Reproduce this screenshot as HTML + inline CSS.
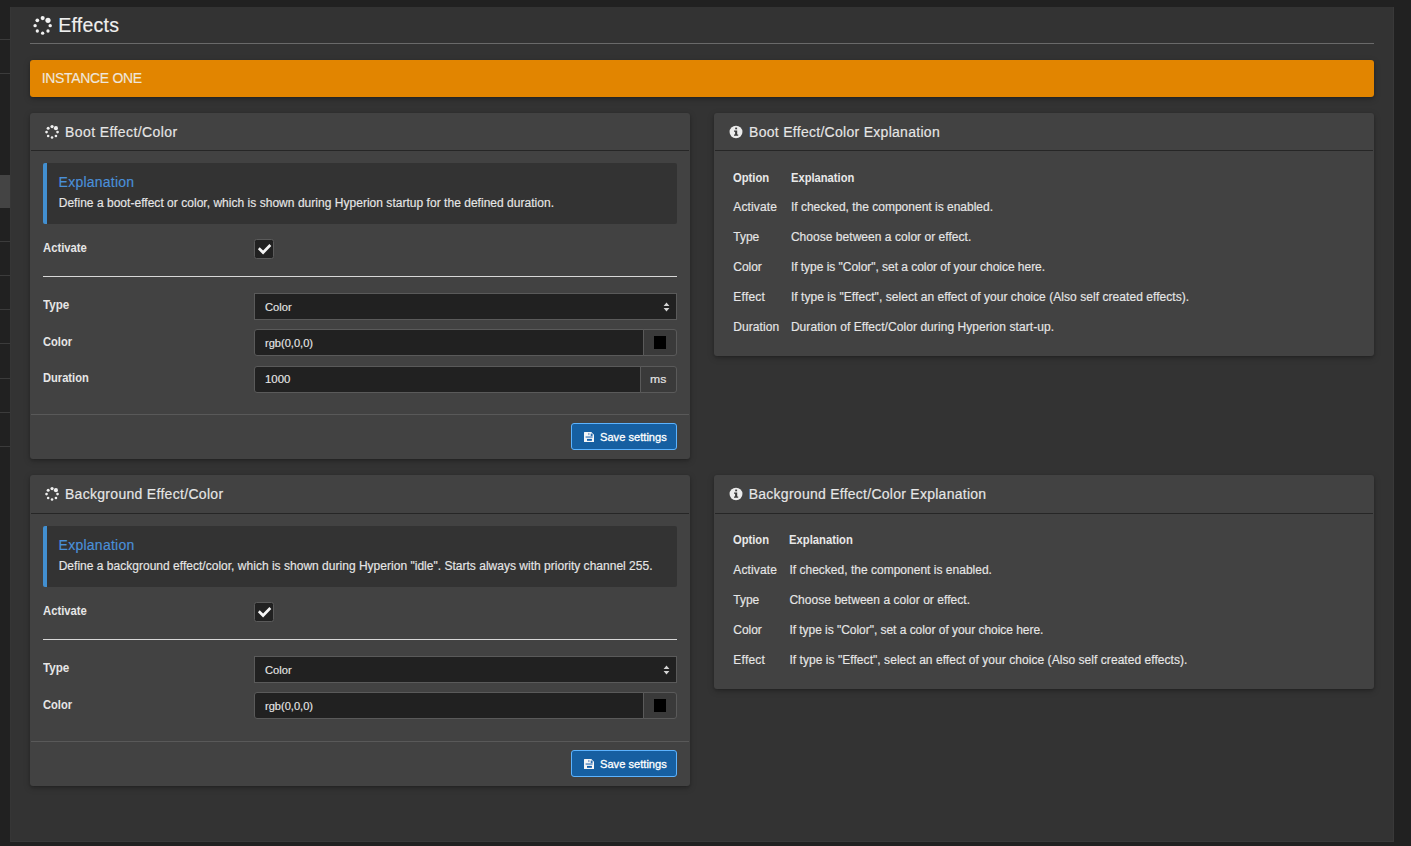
<!DOCTYPE html>
<html lang="en">
<head>
<meta charset="utf-8">
<title>Effects</title>
<style>
*{box-sizing:border-box;margin:0;padding:0}
html,body{width:1411px;height:846px;overflow:hidden;background:#212121}
body{position:relative;font-family:"Liberation Sans",Arial,sans-serif;font-size:12px;color:#e6e6e6}
.abs,.t{position:absolute}
.t{white-space:nowrap;line-height:1;-webkit-text-stroke:0.15px}
#main{position:absolute;left:10px;top:7px;width:1384px;height:835px;background:#333;border-right:1px solid #393939;border-bottom:1px solid #393939;border-left:1px solid #363636}
.sl{position:absolute;left:0;width:10px;height:1px;background:#3b3b3b}
.panel{position:absolute;background:#424242;border-radius:3px;box-shadow:0 2px 6px rgba(0,0,0,.26),0 1px 2px rgba(0,0,0,.14)}
.hb{position:absolute;height:1px;background:#262626}
.fb{position:absolute;height:1px;background:#595959}
.callout{position:absolute;background:#333;border-left:4px solid #428fd0;border-radius:2px}
.hr{position:absolute;height:1px;background:#d8d8d8}
.ctl{position:absolute;background:#212121;border:1px solid #5a5a5a}
.addon{position:absolute;background:#3a3a3a;border:1px solid #5a5a5a;border-radius:0 3px 3px 0}
.btn{position:absolute;background:#165fa1;border:1px solid #5cb3ff;border-radius:3px}
.b{font-weight:bold;-webkit-text-stroke:0}
</style>
</head>
<body>
<!-- sidebar remnants -->
<div class="sl" style="top:39px"></div>
<div class="sl" style="top:73px"></div>
<div class="abs" style="left:0;top:175px;width:10px;height:33px;background:#444"></div>
<div class="sl" style="top:241px"></div>
<div class="sl" style="top:275px"></div>
<div class="sl" style="top:309px"></div>
<div class="sl" style="top:343px"></div>
<div class="sl" style="top:378px"></div>
<div class="sl" style="top:412px"></div>
<div class="sl" style="top:446px"></div>
<div id="main"></div>
<!-- page title -->
<svg class="abs" style="left:31.65px;top:14.65px" width="21.30" height="21.30" viewBox="0 0 21.30 21.30"><g fill="#f2f2f2"><circle cx="10.65" cy="3.10" r="2.05"/><circle cx="15.99" cy="5.31" r="2.6"/><circle cx="18.20" cy="10.65" r="1.7"/><circle cx="15.99" cy="15.99" r="1.65"/><circle cx="10.65" cy="18.20" r="1.65"/><circle cx="5.31" cy="15.99" r="1.65"/><circle cx="3.10" cy="10.65" r="1.7"/><circle cx="5.31" cy="5.31" r="1.85"/></g></svg>
<div class="t" id="t_title" style="left:58.24px;top:16px;font-size:19.5px;color:#efefef;letter-spacing:0.235px">Effects</div>
<div class="abs" style="left:30px;top:43px;width:1344px;height:1px;background:#6a6a6a"></div>
<!-- instance bar -->
<div class="abs" style="left:30px;top:60px;width:1344px;height:37px;background:#e28500;border-radius:3px;box-shadow:0 2px 6px rgba(0,0,0,.26),0 1px 2px rgba(0,0,0,.14)"></div>
<div class="t" id="t_inst" style="left:41.64px;top:71px;font-size:14px;color:#efe6dc;letter-spacing:-0.310px">INSTANCE ONE</div>
<!-- boot effect panel -->
<div class="panel" style="left:30px;top:113px;width:660px;height:346px"></div>
<svg class="abs" style="left:44.00px;top:123.95px" width="16.10" height="16.10" viewBox="0 0 16.10 16.10"><g fill="#efefef"><circle cx="8.05" cy="2.55" r="1.65"/><circle cx="11.94" cy="4.16" r="2.05"/><circle cx="13.55" cy="8.05" r="1.35"/><circle cx="11.94" cy="11.94" r="1.3"/><circle cx="8.05" cy="13.55" r="1.3"/><circle cx="4.16" cy="11.94" r="1.3"/><circle cx="2.55" cy="8.05" r="1.35"/><circle cx="4.16" cy="4.16" r="1.5"/></g></svg>
<div class="t" id="t_ph1" style="left:65.09px;top:125px;font-size:14px;color:#e6e6e6;letter-spacing:0.404px">Boot Effect/Color</div>
<div class="hb" style="left:31px;top:150px;width:658px"></div>
<div class="callout" style="left:43px;top:163px;width:634px;height:61px"></div>
<div class="t" id="t_ex1" style="left:58.60px;top:175px;font-size:14px;color:#4a90d9;letter-spacing:0.232px">Explanation</div>
<div class="t" id="t_desc1" style="left:58.70px;top:197px;font-size:12px;color:#e6e6e6;letter-spacing:0.028px">Define a boot-effect or color, which is shown during Hyperion startup for the defined duration.</div>
<div class="t b" id="t_act1" style="left:43.10px;top:242px;font-size:12.5px;color:#e6e6e6;transform:scaleX(0.9024);transform-origin:0 0">Activate</div>
<div class="ctl" style="left:254px;top:239px;width:20px;height:20px;border-radius:2.5px"></div>
<svg class="abs" style="left:257px;top:243px" width="15" height="12" viewBox="0 0 15 12"><path d="M0.9 6.2 2.7 4.3 6.1 7.6 12.4 1.1 14.3 3.1 6.1 11.4z" fill="#f4f4f4"/></svg>
<div class="hr" style="left:43px;top:276px;width:634px"></div>
<div class="t b" id="t_type1" style="left:43.10px;top:299px;font-size:12.5px;color:#e6e6e6;transform:scaleX(0.9319);transform-origin:0 0">Type</div>
<div class="ctl" style="left:254px;top:293px;width:423px;height:27px"></div>
<div class="t" id="t_sel1" style="left:265.00px;top:302px;font-size:11.4px;color:#e6e6e6;transform:scaleX(0.9780);transform-origin:0 0">Color</div>
<svg class="abs" style="left:662.6px;top:301.5px" width="7" height="10" viewBox="0 0 7 10"><path d="M0.6 4 3.5 0.6 6.4 4z M0.6 6 3.5 9.4 6.4 6z" fill="#d4d4d4"/></svg>
<div class="t b" id="t_col1" style="left:43.10px;top:336px;font-size:12.5px;color:#e6e6e6;transform:scaleX(0.8906);transform-origin:0 0">Color</div>
<div class="ctl" style="left:254px;top:329px;width:390px;height:27px;border-radius:3px 0 0 3px"></div>
<div class="addon" style="left:643px;top:329px;width:34px;height:27px"></div>
<div class="abs" style="left:654px;top:336px;width:12px;height:13px;background:#000"></div>
<div class="t" id="t_rgb1" style="left:265.00px;top:338px;font-size:11.4px;color:#e6e6e6;transform:scaleX(0.9725);transform-origin:0 0">rgb(0,0,0)</div>
<div class="t b" id="t_dur1" style="left:43.10px;top:372px;font-size:12.5px;color:#e6e6e6;transform:scaleX(0.8897);transform-origin:0 0">Duration</div>
<div class="ctl" style="left:254px;top:366px;width:387px;height:27px;border-radius:3px 0 0 3px"></div>
<div class="addon" style="left:640px;top:366px;width:37px;height:27px"></div>
<div class="t" id="t_1000" style="left:265.00px;top:374px;font-size:11.4px;color:#e6e6e6;transform:scaleX(1.0013);transform-origin:0 0">1000</div>
<div class="t" id="t_ms" style="left:649.81px;top:374px;font-size:11.4px;color:#e6e6e6;transform:scaleX(1.0701);transform-origin:0 0">ms</div>
<div class="fb" style="left:31px;top:414px;width:658px"></div>
<div class="btn" style="left:571px;top:423px;width:106px;height:27px"></div>
<svg class="abs" style="left:583.6px;top:432.1px" width="10.4" height="10" viewBox="0 0 10.4 10"><path d="M0.5 0h6.8l3.1 3.1v6.4a.5.5 0 0 1-.5.5H.5a.5.5 0 0 1-.5-.5V.5A.5.5 0 0 1 .5 0z" fill="#f6f6f6"/><rect x="4.3" y="0.9" width="1.1" height="2.2" fill="#6a8fc0"/><rect x="6.7" y="1.6" width="1.9" height="2.6" fill="#2a6db0"/><rect x="1.6" y="4.3" width="7" height="1.5" fill="#5d8fc4"/><rect x="3" y="6.9" width="4.9" height="1.9" fill="#0f5ca8"/></svg>
<div class="t" id="t_save1" style="left:599.56px;top:432px;font-size:11.4px;color:#fff;transform:scaleX(0.9767);transform-origin:0 0;-webkit-text-stroke:0.3px #fff">Save settings</div>
<!-- boot effect explanation -->
<div class="panel" style="left:714px;top:113px;width:660px;height:243px"></div>
<svg class="abs" style="left:729.05px;top:125.00px" width="14" height="14" viewBox="0 0 14 14"><ellipse cx="7" cy="7" rx="6.45" ry="6.25" fill="#ebebeb"/><rect x="6.2" y="2.6" width="1.9" height="1.7" fill="#3a3a3a"/><path d="M5 5.4h3.2v4.1h1v1.3H5V9.5h1.1V6.7H5z" fill="#3a3a3a"/></svg>
<div class="t" id="t_rph1" style="left:749.09px;top:125px;font-size:14px;color:#e6e6e6;letter-spacing:0.285px">Boot Effect/Color Explanation</div>
<div class="hb" style="left:715px;top:150px;width:658px"></div>
<div class="t b" id="t_r1_0a" style="left:733.30px;top:172px;font-size:12.5px;color:#e8e8e8;transform:scaleX(0.8997);transform-origin:0 0">Option</div>
<div class="t b" id="t_r1_0b" style="left:790.90px;top:172px;font-size:12.5px;color:#e8e8e8;transform:scaleX(0.8935);transform-origin:0 0">Explanation</div>
<div class="t" id="t_r1_1a" style="left:733.30px;top:201px;font-size:12px;color:#e6e6e6;letter-spacing:0.143px">Activate</div>
<div class="t" id="t_r1_1b" style="left:790.90px;top:201px;font-size:12px;color:#e6e6e6">If checked, the component is enabled.</div>
<div class="t" id="t_r1_2a" style="left:733.30px;top:231px;font-size:12px;color:#e6e6e6;letter-spacing:-0.012px">Type</div>
<div class="t" id="t_r1_2b" style="left:790.90px;top:231px;font-size:12px;color:#e6e6e6;letter-spacing:0.037px">Choose between a color or effect.</div>
<div class="t" id="t_r1_3a" style="left:733.30px;top:261px;font-size:12px;color:#e6e6e6;letter-spacing:-0.044px">Color</div>
<div class="t" id="t_r1_3b" style="left:790.90px;top:261px;font-size:12px;color:#e6e6e6;letter-spacing:-0.035px">If type is "Color", set a color of your choice here.</div>
<div class="t" id="t_r1_4a" style="left:733.30px;top:291px;font-size:12px;color:#e6e6e6;letter-spacing:0.233px">Effect</div>
<div class="t" id="t_r1_4b" style="left:790.90px;top:291px;font-size:12px;color:#e6e6e6;letter-spacing:0.053px">If type is "Effect", select an effect of your choice (Also self created effects).</div>
<div class="t" id="t_r1_5a" style="left:733.30px;top:321px;font-size:12px;color:#e6e6e6;letter-spacing:0.073px">Duration</div>
<div class="t" id="t_r1_5b" style="left:790.90px;top:321px;font-size:12px;color:#e6e6e6;letter-spacing:0.066px">Duration of Effect/Color during Hyperion start-up.</div>
<!-- background effect panel -->
<div class="panel" style="left:30px;top:475px;width:660px;height:311px"></div>
<svg class="abs" style="left:44.00px;top:485.95px" width="16.10" height="16.10" viewBox="0 0 16.10 16.10"><g fill="#efefef"><circle cx="8.05" cy="2.55" r="1.65"/><circle cx="11.94" cy="4.16" r="2.05"/><circle cx="13.55" cy="8.05" r="1.35"/><circle cx="11.94" cy="11.94" r="1.3"/><circle cx="8.05" cy="13.55" r="1.3"/><circle cx="4.16" cy="11.94" r="1.3"/><circle cx="2.55" cy="8.05" r="1.35"/><circle cx="4.16" cy="4.16" r="1.5"/></g></svg>
<div class="t" id="t_ph2" style="left:64.96px;top:487px;font-size:14px;color:#e6e6e6;letter-spacing:0.300px">Background Effect/Color</div>
<div class="hb" style="left:31px;top:513px;width:658px"></div>
<div class="callout" style="left:43px;top:526px;width:634px;height:61px"></div>
<div class="t" id="t_ex2" style="left:58.60px;top:538px;font-size:14px;color:#4a90d9;letter-spacing:0.247px">Explanation</div>
<div class="t" id="t_desc2" style="left:58.70px;top:560px;font-size:12px;color:#e6e6e6;letter-spacing:0.017px">Define a background effect/color, which is shown during Hyperion "idle". Starts always with priority channel 255.</div>
<div class="t b" id="t_act2" style="left:43.10px;top:605px;font-size:12.5px;color:#e6e6e6;transform:scaleX(0.9024);transform-origin:0 0">Activate</div>
<div class="ctl" style="left:254px;top:602px;width:20px;height:20px;border-radius:2.5px"></div>
<svg class="abs" style="left:257px;top:606px" width="15" height="12" viewBox="0 0 15 12"><path d="M0.9 6.2 2.7 4.3 6.1 7.6 12.4 1.1 14.3 3.1 6.1 11.4z" fill="#f4f4f4"/></svg>
<div class="hr" style="left:43px;top:639px;width:634px"></div>
<div class="t b" id="t_type2" style="left:43.10px;top:662px;font-size:12.5px;color:#e6e6e6;transform:scaleX(0.9319);transform-origin:0 0">Type</div>
<div class="ctl" style="left:254px;top:656px;width:423px;height:27px"></div>
<div class="t" id="t_sel2" style="left:265.00px;top:665px;font-size:11.4px;color:#e6e6e6;transform:scaleX(0.9780);transform-origin:0 0">Color</div>
<svg class="abs" style="left:662.6px;top:664.5px" width="7" height="10" viewBox="0 0 7 10"><path d="M0.6 4 3.5 0.6 6.4 4z M0.6 6 3.5 9.4 6.4 6z" fill="#d4d4d4"/></svg>
<div class="t b" id="t_col2" style="left:43.10px;top:699px;font-size:12.5px;color:#e6e6e6;transform:scaleX(0.8906);transform-origin:0 0">Color</div>
<div class="ctl" style="left:254px;top:692px;width:390px;height:27px;border-radius:3px 0 0 3px"></div>
<div class="addon" style="left:643px;top:692px;width:34px;height:27px"></div>
<div class="abs" style="left:654px;top:699px;width:12px;height:13px;background:#000"></div>
<div class="t" id="t_rgb2" style="left:265.00px;top:701px;font-size:11.4px;color:#e6e6e6;transform:scaleX(0.9725);transform-origin:0 0">rgb(0,0,0)</div>
<div class="fb" style="left:31px;top:741px;width:658px"></div>
<div class="btn" style="left:571px;top:750px;width:106px;height:27px"></div>
<svg class="abs" style="left:583.6px;top:759.1px" width="10.4" height="10" viewBox="0 0 10.4 10"><path d="M0.5 0h6.8l3.1 3.1v6.4a.5.5 0 0 1-.5.5H.5a.5.5 0 0 1-.5-.5V.5A.5.5 0 0 1 .5 0z" fill="#f6f6f6"/><rect x="4.3" y="0.9" width="1.1" height="2.2" fill="#6a8fc0"/><rect x="6.7" y="1.6" width="1.9" height="2.6" fill="#2a6db0"/><rect x="1.6" y="4.3" width="7" height="1.5" fill="#5d8fc4"/><rect x="3" y="6.9" width="4.9" height="1.9" fill="#0f5ca8"/></svg>
<div class="t" id="t_save2" style="left:599.56px;top:759px;font-size:11.4px;color:#fff;transform:scaleX(0.9767);transform-origin:0 0;-webkit-text-stroke:0.3px #fff">Save settings</div>
<!-- background effect explanation -->
<div class="panel" style="left:714px;top:475px;width:660px;height:214px"></div>
<svg class="abs" style="left:729.05px;top:487.00px" width="14" height="14" viewBox="0 0 14 14"><ellipse cx="7" cy="7" rx="6.45" ry="6.25" fill="#ebebeb"/><rect x="6.2" y="2.6" width="1.9" height="1.7" fill="#3a3a3a"/><path d="M5 5.4h3.2v4.1h1v1.3H5V9.5h1.1V6.7H5z" fill="#3a3a3a"/></svg>
<div class="t" id="t_rph2" style="left:748.71px;top:487px;font-size:14px;color:#e6e6e6;letter-spacing:0.260px">Background Effect/Color Explanation</div>
<div class="hb" style="left:715px;top:513px;width:658px"></div>
<div class="t b" id="t_r2_0a" style="left:733.30px;top:534px;font-size:12.5px;color:#e8e8e8;transform:scaleX(0.8942);transform-origin:0 0">Option</div>
<div class="t b" id="t_r2_0b" style="left:789.40px;top:534px;font-size:12.5px;color:#e8e8e8;transform:scaleX(0.9004);transform-origin:0 0">Explanation</div>
<div class="t" id="t_r2_1a" style="left:733.30px;top:564px;font-size:12px;color:#e6e6e6;letter-spacing:0.143px">Activate</div>
<div class="t" id="t_r2_1b" style="left:789.40px;top:564px;font-size:12px;color:#e6e6e6;letter-spacing:0.012px">If checked, the component is enabled.</div>
<div class="t" id="t_r2_2a" style="left:733.30px;top:594px;font-size:12px;color:#e6e6e6;letter-spacing:-0.012px">Type</div>
<div class="t" id="t_r2_2b" style="left:789.40px;top:594px;font-size:12px;color:#e6e6e6;letter-spacing:0.043px">Choose between a color or effect.</div>
<div class="t" id="t_r2_3a" style="left:733.30px;top:624px;font-size:12px;color:#e6e6e6;letter-spacing:-0.044px">Color</div>
<div class="t" id="t_r2_3b" style="left:789.40px;top:624px;font-size:12px;color:#e6e6e6;letter-spacing:-0.038px">If type is "Color", set a color of your choice here.</div>
<div class="t" id="t_r2_4a" style="left:733.30px;top:654px;font-size:12px;color:#e6e6e6;letter-spacing:0.233px">Effect</div>
<div class="t" id="t_r2_4b" style="left:789.40px;top:654px;font-size:12px;color:#e6e6e6;letter-spacing:0.050px">If type is "Effect", select an effect of your choice (Also self created effects).</div>
</body>
</html>
